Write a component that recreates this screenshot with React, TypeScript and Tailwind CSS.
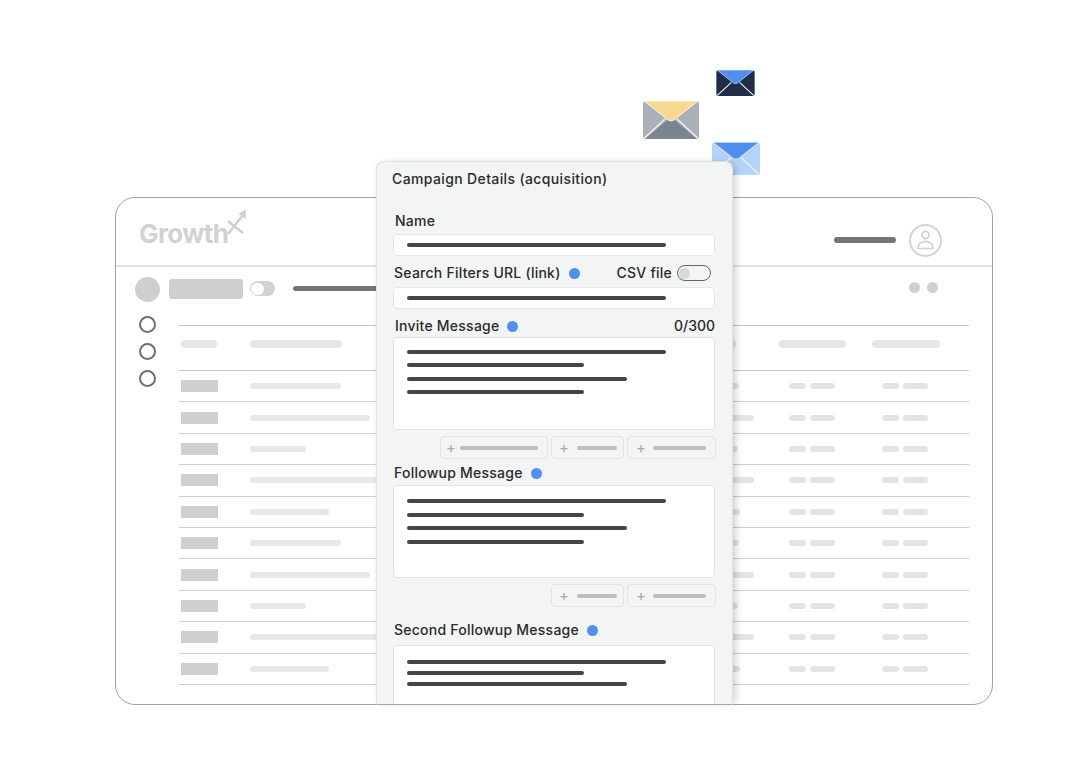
const rows = [
  { name: 91, mid: 39 },
  { name: 120, mid: 54 },
  { name: 56, mid: 38 },
  { name: 140, mid: 54 },
  { name: 79, mid: 40 },
  { name: 91, mid: 39 },
  { name: 120, mid: 54 },
  { name: 56, mid: 38 },
  { name: 140, mid: 54 },
  { name: 79, mid: 40 },
];

function Envelope({ flap, side, bottom, w, h }: { flap: string; side: string; bottom: string; w: number; h: number }) {
  return (
    <svg width={w} height={h} viewBox="0 0 56 38">
      <rect x="0" y="0" width="56" height="38" rx="3" fill={side} />
      <path d="M2 38 L28 16 L54 38 Z" fill={bottom} />
      <path d="M1.5 37 L22 18 M54.5 37 L34 18" stroke="#eef1f4" strokeWidth="1.6" fill="none" />
      <path d="M1 0 H55 L31 19 Q28 21 25 19 Z" fill={flap} stroke="#fff" strokeWidth="0.8" />
    </svg>
  );
}

function Label({ text, dot, className }: { text: string; dot?: boolean; className?: string }) {
  return (
    <div className={`flex items-center text-[14px] font-medium leading-none tracking-[0.24px] text-[#2b2b2b] ${className ?? ""}`}>
      <span>{text}</span>
      {dot ? <span className="ml-2 h-[11px] w-[11px] rounded-full bg-[#4f90f0]" /> : null}
    </div>
  );
}

function Line({ width }: { width: number }) {
  return <div className="h-[4px] rounded-full bg-[#454545]" style={{ width }} />;
}

function InputBox({ className }: { className?: string }) {
  return (
    <div className={`flex h-[22px] w-[322px] items-center rounded border border-[#e6e6e6] bg-white pl-[13px] ${className ?? ""}`}>
      <Line width={259} />
    </div>
  );
}

function TextBox({ height, spacing, lines }: { height: number; spacing: string; lines: number[] }) {
  return (
    <div className={`flex w-[322px] flex-col rounded border border-[#e4e4e4] bg-white pl-[13px] ${spacing}`} style={{ height }}>
      {lines.map((l, i) => (
        <Line key={i} width={l} />
      ))}
    </div>
  );
}

function AddButton({ width, pad, bar, barGap }: { width: number; pad: number; bar: number; barGap: number }) {
  return (
    <div className="flex h-[23px] items-center rounded border border-[#e3e3e3]" style={{ width, paddingLeft: pad }}>
      <span className="w-[10px] text-center text-[15px] leading-none text-[#a8a8a8]">+</span>
      <div className="h-[4px] rounded-full bg-[#bdbdbd]" style={{ width: bar, marginLeft: barGap }} />
    </div>
  );
}

export default function App() {
  return (
    <div className="relative h-[774px] w-[1078px] overflow-hidden bg-white font-['Inter','Liberation_Sans',sans-serif]">
      <div className="absolute left-[716px] top-[70px]">
        <Envelope flap="#4f90ee" side="#1f2d4a" bottom="#1f2d4a" w={39} h={26} />
      </div>
      <div className="absolute left-[643px] top-[101px]">
        <Envelope flap="#f9d98f" side="#aab0b7" bottom="#7b8591" w={56} h={38} />
      </div>
      <div className="absolute left-[712px] top-[142px]">
        <Envelope flap="#4f90ee" side="#b5d3f8" bottom="#b5d3f8" w={48} h={33} />
      </div>

      <div className="ml-[115px] mt-[197px] h-[508px] w-[878px] rounded-[20px] border border-[#a3a3a3] pt-px">
        <header className="flex h-[68px] items-center border-b-2 border-[#e2e2e2] pl-[23px] pr-[50px]">
          <div className="flex items-end pb-[9px]">
            <span className="text-[26px] font-bold leading-none tracking-[-0.6px] text-[#d2d2d2]">Growth</span>
            <svg width="22" height="32" viewBox="0 0 22 32" className="-ml-[1px] mb-[6px]">
              <path d="M1 12 L16 24 M1 25 L16 6" stroke="#cfcfcf" strokeWidth="2.6" fill="none" />
              <path d="M11.5 5 L19 0.5 L18.5 10 Z" fill="#cfcfcf" />
            </svg>
          </div>
          <div className="ml-auto mt-[16px] h-[6px] w-[62px] rounded-full bg-[#757575]" />
          <div className="ml-[13px] mt-[16px] flex h-[33px] w-[33px] items-center justify-center rounded-full border-2 border-[#d4d4d4]">
            <svg width="19" height="22" viewBox="0 0 19 22" fill="none" stroke="#d0d0d0" strokeWidth="1.6">
              <circle cx="9.5" cy="6" r="3.6" />
              <path d="M2 19.5 C2 14.5 5 12.5 9.5 12.5 C14 12.5 17 14.5 17 19.5 Z" strokeLinejoin="round" />
            </svg>
          </div>
        </header>

        <div className="flex h-[42px] items-center pl-[19px] pr-[54px] pt-[1px]">
          <div className="mt-[2px] h-[25px] w-[25px] rounded-full bg-[#cfcfcf]" />
          <div className="ml-[9px] h-[20px] w-[74px] rounded-[3px] bg-[#cecece]" />
          <div className="relative ml-[7px] h-[15px] w-[25px] rounded-full bg-[#d2d2d2]">
            <div className="absolute left-[1px] top-[1.5px] h-[12px] w-[13px] rounded-full bg-white" />
          </div>
          <div className="ml-[18px] h-[5px] w-[90px] rounded-full bg-[#757575]" />
          <div className="mb-[3px] ml-auto h-[11px] w-[11px] rounded-full bg-[#cfcfcf]" />
          <div className="mb-[3px] ml-[7px] h-[11px] w-[11px] rounded-full bg-[#cfcfcf]" />
        </div>

        <div className="flex pl-[23px]">
          <div className="flex w-[40px] flex-col gap-[10px] pt-[7px]">
            <div className="h-[17px] w-[17px] rounded-full border-2 border-[#6f6f6f]" />
            <div className="h-[17px] w-[17px] rounded-full border-2 border-[#6f6f6f]" />
            <div className="h-[17px] w-[17px] rounded-full border-2 border-[#6f6f6f]" />
          </div>
          <div className="mt-[16px] w-[790px] border-t border-[#c4c4c4]">
            <div className="flex h-[45px] items-center border-b border-[#c9c9c9] pb-[8px] pl-[2px]">
              <div className="h-[8px] w-[36px] rounded-full bg-[#e6e6e6]" />
              <div className="ml-[33px] w-[450px]">
                <div className="h-[8px] w-[92px] rounded-full bg-[#e6e6e6]" />
              </div>
              <div className="w-[79px]">
                <div className="h-[8px] w-[36px] rounded-full bg-[#e6e6e6]" />
              </div>
              <div className="h-[8px] w-[67px] rounded-full bg-[#e6e6e6]" />
              <div className="ml-[26px] h-[8px] w-[68px] rounded-full bg-[#e6e6e6]" />
            </div>
            {rows.map((row, i) => (
              <div key={i} className="flex h-[31.4px] items-center border-b border-[#cfcfcf] pl-[2px]">
                <div className="h-[12px] w-[37px] bg-[#cfcfcf]" />
                <div className="ml-[32px] w-[450px]">
                  <div className="h-[6px] rounded-full bg-[#e8e8e8]" style={{ width: row.name }} />
                </div>
                <div className="w-[88px]">
                  <div className="h-[6px] rounded-full bg-[#e4e4e4]" style={{ width: row.mid }} />
                </div>
                <div className="ml-[1px] h-[6px] w-[17px] rounded-full bg-[#e4e4e4]" />
                <div className="ml-[4px] h-[6px] w-[25px] rounded-full bg-[#e4e4e4]" />
                <div className="ml-[47px] h-[6px] w-[17px] rounded-full bg-[#e4e4e4]" />
                <div className="ml-[4px] h-[6px] w-[25px] rounded-full bg-[#e4e4e4]" />
              </div>
            ))}
          </div>
        </div>
      </div>

      <section className="absolute left-[376px] top-[161px] h-[544px] w-[357px] overflow-hidden rounded-t-[8px] border border-[#e2e2e2] border-b-[#a8a8a8] bg-[#f3f4f4] pl-[16px] shadow-[5px_0_8px_-3px_rgba(0,0,0,0.22),-2px_0_5px_-2px_rgba(0,0,0,0.08)]">
        <div className="-ml-[1px] pt-[9px] text-[14px] font-medium leading-[16px] tracking-[0.37px] text-[#2b2b2b]">Campaign Details (acquisition)</div>
        <Label text="Name" className="ml-[2px] mt-[27px]" />
        <InputBox className="mt-[6px]" />
        <div className="mt-[10px] flex h-[14px] w-[318px] items-center justify-between">
          <Label text="Search Filters URL (link)" dot className="ml-[1px]" />
          <div className="flex items-center">
            <Label text="CSV file" />
            <div className="relative ml-[5px] h-[16px] w-[34px] rounded-full border border-[#666] bg-[#f3f4f4]">
              <div className="absolute left-[1px] top-[1.5px] h-[11px] w-[11px] rounded-full bg-[#d8d8d8]" />
            </div>
          </div>
        </div>
        <InputBox className="mt-[7px]" />
        <div className="mb-[4px] mt-[10px] flex h-[14px] w-[322px] items-center justify-between pl-[2px]">
          <Label text="Invite Message" dot />
          <span className="text-[14px] font-medium leading-none text-[#2b2b2b]">0/300</span>
        </div>
        <TextBox height={93} spacing="gap-[9.4px] pt-[12px]" lines={[259, 177, 220, 177]} />
        <div className="mt-[6px] flex w-[323px] justify-end gap-[3px]">
          <AddButton width={108} pad={5} bar={78} barGap={4} />
          <AddButton width={73} pad={7} bar={40} barGap={8} />
          <AddButton width={89} pad={8} bar={53} barGap={7} />
        </div>
        <Label text="Followup Message" dot className="ml-[1px] mt-[7px]" />
        <div className="mt-[5px]">
          <TextBox height={93} spacing="gap-[9.6px] pt-[13px]" lines={[259, 177, 220, 177]} />
        </div>
        <div className="mt-[6px] flex w-[323px] justify-end gap-[3px]">
          <AddButton width={73} pad={7} bar={40} barGap={8} />
          <AddButton width={89} pad={8} bar={53} barGap={7} />
        </div>
        <Label text="Second Followup Message" dot className="ml-[1px] mt-[16px]" />
        <div className="mt-[8px]">
          <TextBox height={93} spacing="gap-[7px] pt-[14px]" lines={[259, 177, 220]} />
        </div>
      </section>
    </div>
  );
}
